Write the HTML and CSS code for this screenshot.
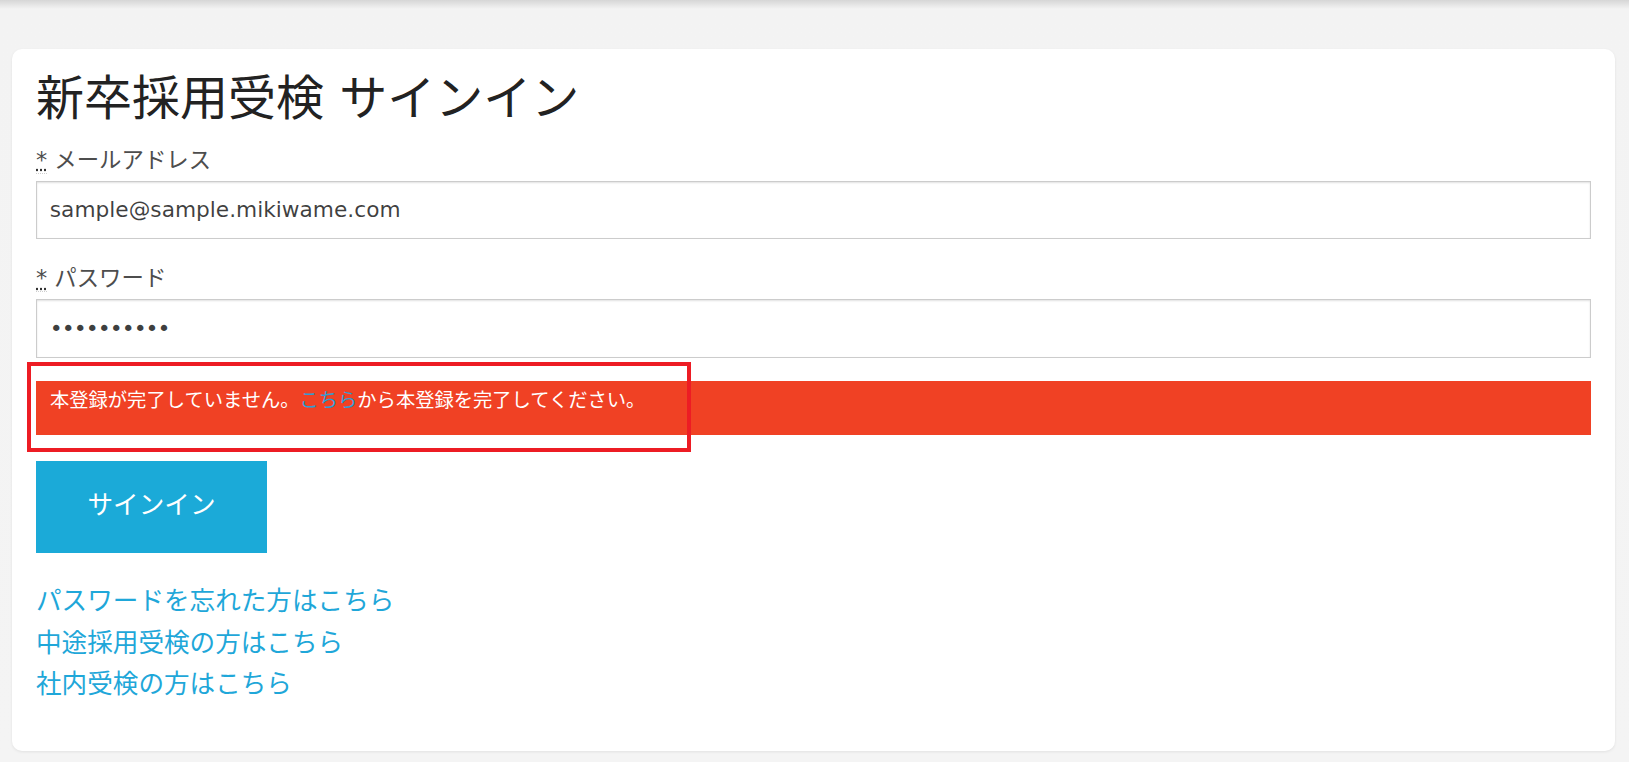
FILE: index.html
```html
<!DOCTYPE html>
<html lang="ja">
<head>
<meta charset="utf-8">
<title>新卒採用受検 サインイン</title>
<link rel="stylesheet" href="styles.css">
</head>
<body>
<main class="page">
  <section class="card">
    <h1 class="title">新卒採用受検 サインイン</h1>
    <form class="form">
      <label class="field-label" for="email"><abbr title="required">*</abbr> メールアドレス</label>
      <input class="field-input" id="email" type="email" value="sample@sample.mikiwame.com">
      <label class="field-label" for="password"><abbr title="required">*</abbr> パスワード</label>
      <input class="field-input field-password" id="password" type="password" value="password12">
      <div class="alert-wrap">
        <div class="alert">本登録が完了していません。<a class="alert-link" href="#">こちら</a>から本登録を完了してください。</div>
        <div class="annotation"></div>
      </div>
      <button class="btn" type="button">サインイン</button>
    </form>
    <ul class="links">
      <li><a class="link" href="#">パスワードを忘れた方はこちら</a></li>
      <li><a class="link" href="#">中途採用受検の方はこちら</a></li>
      <li><a class="link" href="#">社内受検の方はこちら</a></li>
    </ul>
  </section>
</main>
</body>
</html>
```
FILE: styles.css
```css
html, body {
  margin: 0;
  padding: 0;
}

body {
  background: linear-gradient(to bottom, #d6d6d6 0, #f3f3f3 9px, #f4f4f4 100%);
  font-family: "DejaVu Sans", "Noto Sans CJK JP", sans-serif;
  color: #222;
  min-height: 762px;
}

.page {
  padding: 49px 14px 0 12px;
}

.card {
  background: #fff;
  border-radius: 10px;
  box-shadow: 0 1px 3px rgba(0, 0, 0, 0.08);
  padding: 16px 24px 45px;
}

.title {
  margin: 0 0 11.4px;
  font-size: 48px;
  line-height: 67.2px;
  font-weight: normal;
  color: #222;
}

.form {
  margin: 0;
}

.field-label {
  display: block;
  font-size: 22.4px;
  line-height: 33.6px;
  color: #4d4d4d;
  margin-bottom: 3.5px;
}

.field-label abbr {
  text-decoration: underline dotted #333;
  text-underline-offset: 2px;
  border-bottom: 1px dotted #cfcfcf;
  cursor: help;
}

.field-input {
  display: block;
  box-sizing: border-box;
  width: 100%;
  height: 58.5px;
  margin: 0 0 23px;
  padding: 0 12.8px;
  border: 1px solid #cccccc;
  box-shadow: inset 0 1px 2px rgba(0, 0, 0, 0.12);
  background: #fff;
  font-family: "DejaVu Sans", "Noto Sans CJK JP", sans-serif;
  font-size: 21.7px;
  color: rgba(0, 0, 0, 0.75);
  outline: none;
}

.field-password {
  font-size: 22px;
  letter-spacing: -1px;
}

.alert-wrap {
  position: relative;
  margin-top: 1.7px;
}

.alert {
  background: #f04124;
  color: #fff;
  font-size: 19.3px;
  line-height: 30.7px;
  padding: 5px 14px 18.5px;
}

.alert-link {
  color: #2f9ed6;
  text-decoration: none;
}

.annotation {
  position: absolute;
  left: -9px;
  top: -19px;
  width: 664px;
  height: 90px;
  box-sizing: border-box;
  border: 4px solid #ed1c24;
  pointer-events: none;
}

.btn {
  display: block;
  box-sizing: border-box;
  width: 231px;
  height: 92px;
  margin: 25.6px 0 0;
  padding: 0 0 3px;
  border: 0;
  background: #1baad8;
  color: #fff;
  font-family: "DejaVu Sans", "Noto Sans CJK JP", sans-serif;
  font-size: 25.6px;
  line-height: 26px;
}

.links {
  list-style: none;
  margin: 28.7px 0 0;
  padding: 0;
}

.links li {
  font-size: 25.6px;
  line-height: 41.5px;
}

.link {
  color: #1fa7d9;
  text-decoration: none;
}
```
